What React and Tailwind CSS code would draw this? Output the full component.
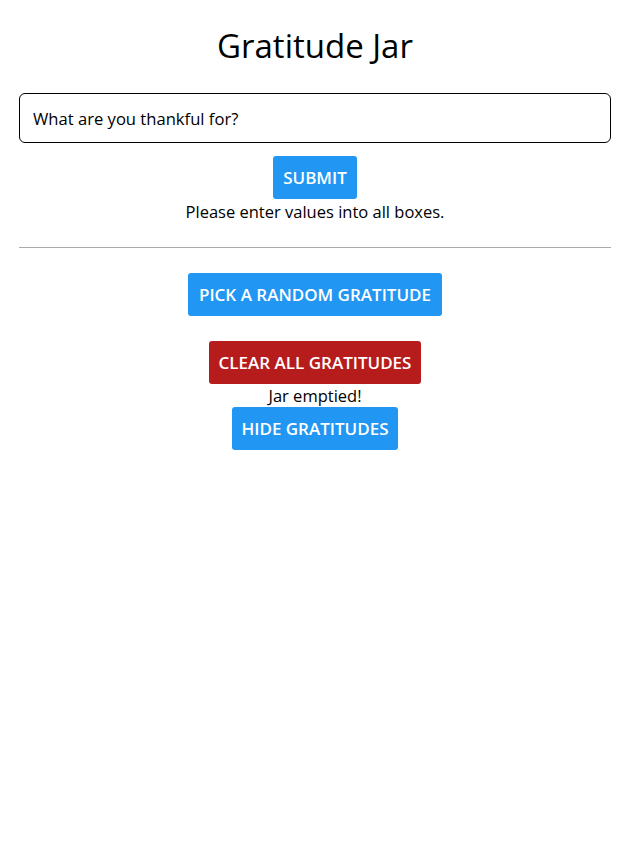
import React, { useState } from 'react';

const font = { fontFamily: '"Open Sans", "Noto Sans", Arial, sans-serif' };

const App = () => {
  const [text, setText] = useState('');

  return (
    <div className="min-h-screen bg-white px-[19px] text-black" style={font}>
      <h1 className="pt-[27px] text-center text-[33px] leading-[38px] font-normal">Gratitude Jar</h1>

      <div className="mt-[28px]">
        <input
          type="text"
          value={text}
          onChange={(e) => setText(e.target.value)}
          placeholder="What are you thankful for?"
          className="block h-[50px] w-full rounded-[6px] border border-black px-[13px] text-[16.6px] placeholder:text-black focus:outline-none"
        />
      </div>

      <div className="mt-[13px] flex flex-col items-center">
        <button className="h-[43px] rounded-[3px] bg-[#2196f3] px-[10px] text-[17px] font-semibold text-white">
          SUBMIT
        </button>
        <p className="text-[16.5px] leading-[26px]">Please enter values into all boxes.</p>
      </div>

      <hr className="mt-[22px] border-t border-[#aaaaaa]" />

      <div className="mt-[25px] flex flex-col items-center">
        <button className="h-[43px] rounded-[3px] bg-[#2196f3] px-[11px] text-[17px] font-semibold text-white">
          PICK A RANDOM GRATITUDE
        </button>
        <button className="mt-[25px] h-[43px] rounded-[3px] bg-[#b71c1c] px-[10px] text-[17px] font-semibold text-white">
          CLEAR ALL GRATITUDES
        </button>
        <p className="text-[16.5px] leading-[23px]">Jar emptied!</p>
        <button className="h-[43px] rounded-[3px] bg-[#2196f3] px-[9px] text-[17px] font-semibold text-white">
          HIDE GRATITUDES
        </button>
      </div>
    </div>
  );
};

export default App;
